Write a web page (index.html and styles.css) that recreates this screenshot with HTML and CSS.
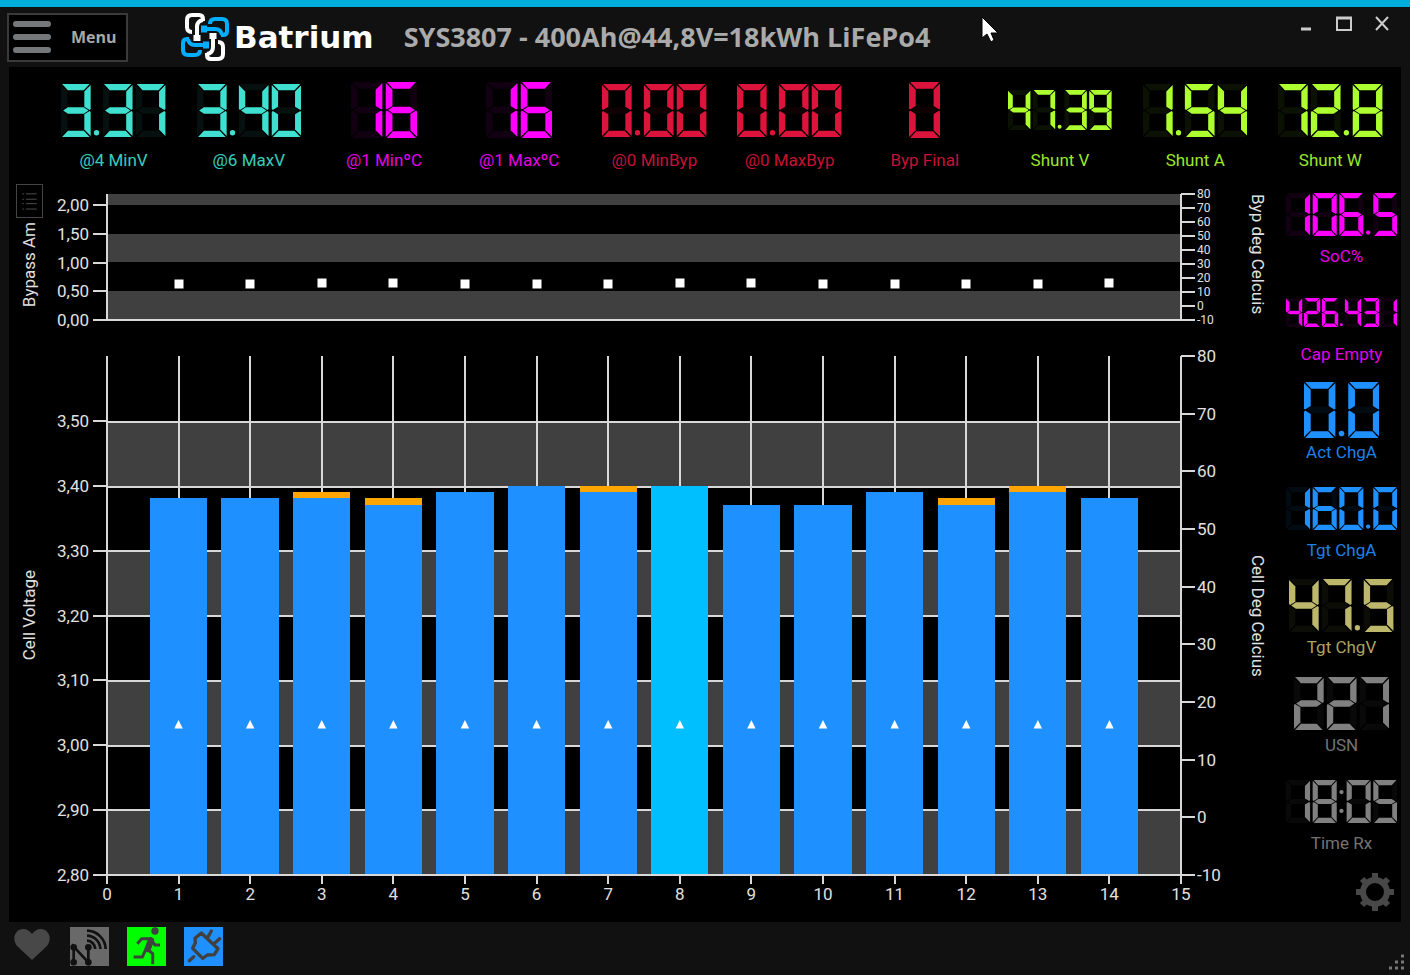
FILE: index.html
```html
<!DOCTYPE html>
<html lang="en">
<head>
<meta charset="utf-8">
<meta name="viewport" content="width=device-width, initial-scale=1">
<title>Batrium</title>
<link rel="stylesheet" href="styles.css">
</head>
<body>
<div class="window">
  <header class="titlebar">
    <button class="menu-button" type="button">
      <svg class="menu-icon" viewBox="0 0 38 34" aria-hidden="true"><path d="M3 4H35M3 17H35M3 30H35"/></svg>
      <span>Menu</span>
    </button>
    <div class="brand">
      <svg class="brand-mark" viewBox="-25 -25 50 50" aria-hidden="true">
        <g id="link"><path d="M-2 -16V-18Q-2 -22 -6 -22H-13Q-18 -22 -18 -17V-10Q-18 -5 -13 -5M-2 -17Q-8 -16 -8 -10V2"/><path class="link-end" d="M-8 -2V4"/></g>
        <use href="#link" transform="rotate(180)"/>
        <g class="link-blue"><use href="#link" transform="rotate(90)"/><use href="#link" transform="rotate(270)"/></g>
      </svg>
      <span class="brand-name">Batrium</span>
    </div>
    <h1 class="system-name">SYS3807 - 400Ah@44,8V=18kWh LiFePo4</h1>
    <div class="window-controls">
      <button type="button" aria-label="Minimize"><svg viewBox="0 0 16 16"><path class="heavy" d="M3 13H13"/></svg></button>
      <button type="button" aria-label="Maximize"><svg viewBox="0 0 16 16"><path d="M1 2V14H15V2"/><path class="heavy" d="M0 2H16"/></svg></button>
      <button type="button" aria-label="Close"><svg viewBox="0 0 16 16"><path d="M2 1L14 14M14 1L2 14"/></svg></button>
    </div>
    <svg class="pointer" viewBox="0 0 18 27" aria-hidden="true"><path d="M1 1V22L6 18L10 26L13 24L10 17H17Z"/></svg>
  </header>

  <main class="panel">
    <section class="top-gauges">
      <div class="gauge turquoise"><div class="readout size-m" data-value="3.37"></div><span>@4 MinV</span></div>
      <div class="gauge turquoise"><div class="readout size-m" data-value="3.40"></div><span>@6 MaxV</span></div>
      <div class="gauge magenta"><div class="readout size-l" data-value="16"></div><span>@1 MinºC</span></div>
      <div class="gauge magenta"><div class="readout size-l" data-value="16"></div><span>@1 MaxºC</span></div>
      <div class="gauge crimson"><div class="readout size-m" data-value="0.00"></div><span>@0 MinByp</span></div>
      <div class="gauge crimson"><div class="readout size-m" data-value="0.00"></div><span>@0 MaxByp</span></div>
      <div class="gauge crimson"><div class="readout size-l" data-value="0"></div><span>Byp Final</span></div>
      <div class="gauge lime"><div class="readout size-s" data-value="47.39"></div><span>Shunt V</span></div>
      <div class="gauge lime"><div class="readout size-m" data-value="1.54"></div><span>Shunt A</span></div>
      <div class="gauge lime"><div class="readout size-m" data-value="72.8"></div><span>Shunt W</span></div>
    </section>

    <section class="charts">
      <div class="title-cell bypass-title">
        <button class="list-button" type="button" aria-label="List">
          <svg viewBox="0 0 28 34"><path d="M6 9H8M6 15H8M6 20H8M6 26H8M10 9H22M10 15H22M10 20H22M10 26H22"/></svg>
        </button>
        <span class="axis-title upward">Bypass Am</span>
      </div>
      <div class="axis left bypass-left" id="bypass-left"></div>
      <div class="plot bypass-plot" id="bypass-plot"></div>
      <div class="axis right small" id="bypass-right"></div>
      <div class="title-cell"><span class="axis-title">Byp deg Celcuis</span></div>

      <div class="title-cell cell-title"><span class="axis-title upward">Cell Voltage</span></div>
      <div class="axis left cell-left" id="cell-left"></div>
      <div class="plot cell-plot" id="cell-plot"></div>
      <div class="axis right" id="cell-right"></div>
      <div class="title-cell cell-title"><span class="axis-title">Cell Deg Celcius</span></div>

      <div class="x-axis" id="x-axis"></div>
    </section>

    <aside class="side">
      <div class="gauge magenta"><div class="readout size-s2" data-value="106.5"></div><span>SoC%</span></div>
      <div class="gauge magenta"><div class="readout size-xs" data-value="426.431"></div><span>Cap Empty</span></div>
      <div class="gauge blue"><div class="readout size-l" data-value="0.0"></div><span>Act ChgA</span></div>
      <div class="gauge blue"><div class="readout size-s2" data-value="160.0"></div><span>Tgt ChgA</span></div>
      <div class="gauge khaki"><div class="readout size-m" data-value="47.5"></div><span>Tgt ChgV</span></div>
      <div class="gauge gray"><div class="readout size-m" data-value="227"></div><span>USN</span></div>
      <div class="gauge gray"><div class="readout size-s2" data-value="18:05"></div><span>Time Rx</span></div>
      <button class="settings" type="button" aria-label="Settings">
        <svg viewBox="-20 -20 40 40"><circle r="12"/><path d="M0 -13V-19M0 13V19M-13 0H-19M13 0H19M9 -9L13 -13M-9 9L-13 13M9 9L13 13M-9 -9L-13 -13"/></svg>
      </button>
    </aside>
  </main>

  <footer class="statusbar">
    <svg class="status heart" viewBox="0 0 39 39" aria-hidden="true"><path d="M19 33L4 19C-2 11 3 2 10 2C14 2 17 4 19 7C21 4 24 2 28 2C35 2 40 11 34 19Z"/></svg>
    <svg class="status network" viewBox="0 0 117 117" aria-hidden="true"><path d="M11 106V59L55 106V59M51 11A57 57 0 0 1 107 66M51 26A41 41 0 0 1 91 66M51 41A26 26 0 0 1 76 66"/><circle cx="11" cy="61" r="10"/><circle cx="11" cy="106" r="10"/><circle cx="55" cy="61" r="10"/><circle cx="55" cy="106" r="10"/></svg>
    <svg class="status run" viewBox="0 0 117 117" aria-hidden="true"><circle cx="84" cy="12" r="11"/><path d="M31 50L44 35H70L84 54H99M60 66L77 80V112M56 68L46 90H20"/><path class="torso" d="M72 40L62 66"/></svg>
    <svg class="status plug" viewBox="0 0 117 117" aria-hidden="true"><path d="M52 18L102 65L91 83L70 84L56 94L26 64L34 48L33 34ZM70 33L82 12M88 52L107 35"/><path d="M16 101L29 89"/></svg>
    <svg class="grip" viewBox="0 0 16 16" aria-hidden="true"><path d="M12 2H15M6 8H9M12 8H15M0 14H3M6 14H9M12 14H15"/></svg>
  </footer>
</div>
<script src="script.js"></script>
</body>
</html>
```
FILE: styles.css
```css
* { box-sizing: border-box; }
body {
  margin: 0;
  background: #111;
  color: #e0e0e0;
  font: 17px/20px Roboto, "Liberation Sans", sans-serif;
}
button { font: inherit; color: inherit; padding: 0; border: 0; background: none; }
svg { display: block; }

.window {
  display: flex;
  flex-direction: column;
  min-height: 100vh;
  border-top: 7px solid #00aedb;
}

/* Title bar */
.titlebar { position: relative; display: flex; align-items: center; height: 60px; padding: 0 20px 0 7px; }
.menu-button {
  display: flex; align-items: center; gap: 20px;
  width: 121px; height: 49px; padding-left: 4px;
  background: #000; border: 2px solid #3a3a3a;
  color: #a8a8a8; font: bold 16px/20px "Open Sans", sans-serif;
}
.menu-icon { width: 38px; height: 34px; fill: none; stroke: #75787b; stroke-width: 6; stroke-linecap: round; }
.brand { display: flex; align-items: center; gap: 4px; margin-left: 52px; }
.brand-mark { width: 50px; height: 50px; fill: none; stroke: #fff; stroke-width: 4; }
.link-end { stroke-width: 7; }
.link-blue { stroke: #00aeff; }
.brand-name { color: #fff; font: bold 31px/40px "DejaVu Sans", sans-serif; }
.system-name { margin: 0 auto 0 30px; color: #aaa; font: bold 27px/36px "Open Sans", sans-serif; white-space: nowrap; }
.window-controls { display: flex; align-self: flex-start; gap: 22px; padding-top: 9px; }
.window-controls svg { width: 16px; height: 16px; fill: none; stroke: #ccc; stroke-width: 2; }
.window-controls .heavy { stroke-width: 3; }
.pointer { position: absolute; left: 981px; top: 9px; width: 18px; height: 27px; fill: #fff; stroke: #000; }

/* Main panel */
.panel {
  flex: 1;
  display: grid;
  grid-template-columns: minmax(0, 1fr) 118px;
  grid-template-rows: 117px minmax(0, 1fr);
  column-gap: 9px;
  margin: 0 9px;
  background: #000;
}
.top-gauges {
  grid-column: 1 / -1;
  display: grid;
  grid-template-columns: repeat(10, minmax(0, 1fr));
  padding: 13px 3px 0 37px;
}

/* Gauges */
.gauge { display: flex; flex-direction: column; align-items: center; white-space: nowrap; }
.gauge > span { opacity: 0.9; }
.top-gauges .gauge { gap: 10px; }
.readout { display: flex; align-items: center; height: 60px; }
.readout svg { fill: currentColor; }
.readout .off { opacity: 0.07; }
.size-l svg { height: 56px; }
.size-m svg { height: 53px; }
.size-s svg { height: 40px; }
.size-s2 svg { height: 43px; }
.size-xs svg { height: 29px; }
.turquoise { color: #40e0d0; }
.magenta { color: #f0f; }
.crimson { color: #dc143c; }
.lime { color: #adff2f; }
.blue { color: #1e90ff; }
.khaki { color: #bdb76b; }
.gray { color: #808080; }

.side {
  display: grid;
  grid-template-rows: repeat(7, minmax(0, 1fr)) 51px;
  padding: 2px 1px 0 0;
}
.side .readout { padding-bottom: 3px; }
.settings { justify-self: end; align-self: start; margin: 1px 5px 0 0; }
.settings svg { width: 40px; height: 40px; fill: none; stroke: #484848; stroke-width: 6; }

/* Charts */
.charts {
  display: grid;
  grid-template-columns: 40px 58px minmax(0, 1fr) 60px 33px;
  grid-template-rows: minmax(0, 17fr) minmax(0, 70fr) 11px;
  row-gap: 36px;
  padding-top: 10px;
}
.title-cell { display: flex; flex-direction: column; align-items: center; min-height: 0; }
.bypass-title { margin-top: -10px; gap: 4px; }
.cell-title { justify-content: center; }
.axis-title { writing-mode: vertical-rl; white-space: nowrap; }
.upward { transform: rotate(180deg); }
.list-button { width: 27px; height: 34px; border: 1px solid #444; }
.list-button svg { width: 25px; height: 32px; fill: none; stroke: #555; stroke-width: 1; }

.axis { display: grid; }
.tick { display: flex; align-items: center; align-self: end; height: 0; gap: 4px; }
.left .tick { justify-content: flex-end; }
.left .tick::after, .right .tick::before { content: ""; width: 14px; height: 2px; background: #d8d8d8; }
.bypass-left { grid-template-rows: 2fr 5fr 5fr 5fr 5fr; }
.cell-left { grid-template-rows: repeat(8, 1fr); }
.axis.right { display: flex; flex-direction: column; justify-content: space-between; }
.right .tick { align-self: auto; gap: 2px; }
.small { font-size: 12px; }

.plot { display: grid; min-height: 0; border: solid #d8d8d8; border-width: 0 2px 2px; margin: 0 -1px -1px; }
.bands, .columns { grid-area: 1 / 1; min-height: 0; display: grid; }
.bypass-plot .bands { grid-template-rows: 2fr 5fr 5fr 5fr 5fr; }
.bypass-plot .band:nth-child(odd), .cell-plot .band:nth-child(even) { background: #404040; }
.cell-plot .bands { grid-template-rows: repeat(8, 1fr); }
.cell-plot .band + .band { border-top: 2px solid #d8d8d8; }
.columns {
  grid-template-columns: repeat(14, minmax(0, 1fr));
  grid-template-rows: 100%;
  margin: 0 -1px;
  padding: 0 calc(100% / 30);
}
.column { display: grid; grid-template-columns: 1fr 8fr 1fr; position: relative; }
.cell-plot .column { background: linear-gradient(#d8d8d8, #d8d8d8) center / 2px 100% no-repeat; }
.bar { grid-column: 2; align-self: end; display: flex; flex-direction: column; background: #1e90ff; }
.bar.highlight { background: #00bfff; }
.balance { background: #ffa500; }
.marker { position: absolute; left: 50%; width: 9px; height: 9px; transform: translate(-50%, 50%); background: #fff; }
.marker.triangle { clip-path: polygon(50% 0, 100% 100%, 0 100%); }

.x-axis { grid-column: 3; display: flex; justify-content: space-between; margin-top: -36px; }
.x-tick { display: flex; flex-direction: column; align-items: center; width: 0; }
.x-tick::before { content: ""; flex: none; width: 2px; height: 9px; background: #d8d8d8; }

/* Status bar */
.statusbar { display: flex; align-items: center; gap: 18px; height: 53px; padding: 0 5px 5px 13px; }
.status { width: 39px; height: 39px; fill: none; stroke: #404040; stroke-width: 9; }
.heart { fill: #484848; stroke: none; }
.network { background: #696969; stroke: #111; stroke-width: 8; }
.network circle { fill: #111; stroke: none; }
.run { background: #0f0; }
.run circle { fill: #404040; stroke: none; }
.run .torso { stroke-width: 19; stroke-linecap: round; }
.plug { background: #1e90ff; stroke-width: 10; stroke-linecap: round; stroke-linejoin: round; }
.grip { width: 16px; height: 16px; margin: 0 0 0 auto; align-self: flex-end; stroke: #777; stroke-width: 3; }
```
FILE: script.js
```js
// Lamp segments of one display cell, 56 wide and 100 high.
const SEGMENTS = {
  a: "M2 0H54L43 12H13Z",
  b: "M56 2V47L54 49L44 43V14Z",
  c: "M56 98V53L54 51L44 57V86Z",
  d: "M2 100H54L43 88H13Z",
  e: "M0 98V53L2 51L12 57V86Z",
  f: "M0 2V47L2 49L12 43V14Z",
  g: "M4 50L13 44H43L52 50L43 56H13Z"
};
const LIT = {
  0: "abcdef", 1: "bc", 2: "abged", 3: "abgcd", 4: "fgbc",
  5: "afgcd", 6: "afgecd", 7: "abc", 8: "abcdefg", 9: "abcdfg"
};

function lampDisplay(value) {
  let x = 0;
  let shapes = "";
  for (const ch of value) {
    if (ch === ".") {
      shapes += `<circle cx="${x + 5}" cy="92" r="5"/>`;
      x += 17;
    } else if (ch === ":") {
      shapes += `<circle cx="${x + 5}" cy="28" r="5"/><circle cx="${x + 5}" cy="72" r="5"/>`;
      x += 17;
    } else {
      shapes += `<g transform="translate(${x} 0)">`;
      for (const [name, d] of Object.entries(SEGMENTS)) {
        shapes += `<path class="${LIT[ch].includes(name) ? "on" : "off"}" d="${d}"/>`;
      }
      shapes += "</g>";
      x += 62;
    }
  }
  return `<svg viewBox="0 0 ${x - 6} 100" role="img" aria-label="${value}">${shapes}</svg>`;
}

document.querySelectorAll(".readout").forEach(el => {
  el.innerHTML = lampDisplay(el.dataset.value);
});

const byId = id => document.getElementById(id);
const ticks = labels => labels.map(t => `<div class="tick"><span>${t}</span></div>`).join("");
const degrees = [80, 70, 60, 50, 40, 30, 20, 10, 0, -10];

byId("bypass-left").innerHTML = ticks(["2,00", "1,50", "1,00", "0,50", "0,00"]);
byId("cell-left").innerHTML = ticks(["3,50", "3,40", "3,30", "3,20", "3,10", "3,00", "2,90", "2,80"]);
byId("bypass-right").innerHTML = ticks(degrees);
byId("cell-right").innerHTML = ticks(degrees);
byId("x-axis").innerHTML = Array.from({ length: 16 }, (_, i) => `<div class="x-tick"><span>${i}</span></div>`).join("");

// volts: cell voltage, peak: highest voltage seen, bypass: bypass temperature
const cells = [
  { volts: 3.38, peak: 3.38, bypass: 15 },
  { volts: 3.38, peak: 3.38, bypass: 15 },
  { volts: 3.38, peak: 3.39, bypass: 16 },
  { volts: 3.37, peak: 3.38, bypass: 16 },
  { volts: 3.39, peak: 3.39, bypass: 15 },
  { volts: 3.40, peak: 3.40, bypass: 15 },
  { volts: 3.39, peak: 3.40, bypass: 15 },
  { volts: 3.40, peak: 3.40, bypass: 16, highlight: true },
  { volts: 3.37, peak: 3.37, bypass: 16 },
  { volts: 3.37, peak: 3.37, bypass: 15 },
  { volts: 3.39, peak: 3.39, bypass: 15 },
  { volts: 3.37, peak: 3.38, bypass: 15 },
  { volts: 3.39, peak: 3.40, bypass: 15 },
  { volts: 3.38, peak: 3.38, bypass: 16 }
];
const degreePercent = t => (t + 10) / 90 * 100;
const bands = n => `<div class="bands">${'<div class="band"></div>'.repeat(n)}</div>`;

byId("bypass-plot").innerHTML = bands(5) + `<div class="columns">${cells.map(c =>
  `<div class="column"><div class="marker" style="bottom:${degreePercent(c.bypass)}%"></div></div>`).join("")}</div>`;

byId("cell-plot").innerHTML = bands(8) + `<div class="columns">${cells.map(c => {
  const height = (c.peak - 2.8) / 0.8 * 100;
  const cap = (c.peak - c.volts) / (c.peak - 2.8) * 100;
  return `<div class="column"><div class="bar${c.highlight ? " highlight" : ""}" style="height:${height}%">` +
    `<div class="balance" style="height:${cap}%"></div></div>` +
    `<div class="marker triangle" style="bottom:${degreePercent(16)}%"></div></div>`;
}).join("")}</div>`;
```
